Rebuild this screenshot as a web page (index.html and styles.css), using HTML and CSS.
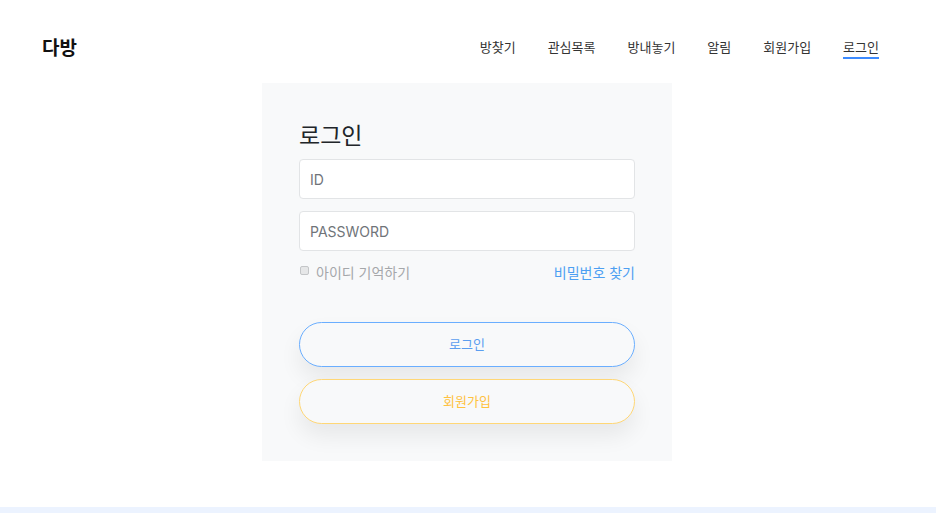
FILE: index.html
```html
<!DOCTYPE html>
<html lang="ko">
<head>
<meta charset="utf-8">
<title>다방 - 로그인</title>
<link rel="stylesheet" href="styles.css">
</head>
<body>
<header class="header">
  <div class="logo">다방</div>
  <nav class="nav">
    <a class="nav-link" href="#">방찾기</a>
    <a class="nav-link" href="#">관심목록</a>
    <a class="nav-link" href="#">방내놓기</a>
    <a class="nav-link" href="#">알림</a>
    <a class="nav-link" href="#">회원가입</a>
    <a class="nav-link active" href="#">로그인</a>
  </nav>
</header>
<main class="main">
  <form class="card">
    <h2 class="title">로그인</h2>
    <input class="field" type="text" placeholder="ID">
    <input class="field" type="password" placeholder="PASSWORD">
    <div class="options">
      <label class="remember"><span class="check"></span>아이디 기억하기</label>
      <a class="find" href="#">비밀번호 찾기</a>
    </div>
    <div class="buttons">
      <button type="button" class="btn btn-login">로그인</button>
      <button type="button" class="btn btn-join">회원가입</button>
    </div>
  </form>
</main>
<footer class="footer"></footer>
</body>
</html>
```
FILE: styles.css
```css
* { box-sizing: border-box; }
html, body { margin: 0; padding: 0; }
body {
  font-family: "Noto Sans CJK KR", "Noto Sans", sans-serif;
  color: #212529;
  background: #fff;
  overflow: hidden;
}
.header {
  height: 83px;
  display: flex;
  justify-content: space-between;
  align-items: flex-start;
  padding: 37px 57px 0 42px;
}
.logo {
  font-size: 19px;
  font-weight: 700;
  line-height: 20px;
  color: #111;
}
.nav {
  display: flex;
  gap: 32px;
}
.nav-link {
  font-size: 13px;
  line-height: 20px;
  color: #333;
  text-decoration: none;
  border-bottom: 2px solid transparent;
}
.nav-link.active { border-bottom-color: #3d8bff; }
.main {
  display: flex;
  justify-content: center;
  padding: 0 2px 46px 0;
}
.card {
  width: 410px;
  background: #f8f9fa;
  padding: 36px 37px 37px;
  display: flex;
  flex-direction: column;
}
.title {
  margin: 0 0 10px 0;
  font-size: 23px;
  font-weight: 400;
  line-height: 30px;
  color: #212529;
}
.field {
  height: 40px;
  width: 100%;
  border: 1px solid #e2e4e6;
  border-radius: 4px;
  background: #fff;
  padding: 0 10px;
  font-family: "Inter", "Noto Sans", sans-serif;
  font-size: 14px;
  color: #495057;
  outline: none;
}
.field::placeholder { color: #6f7479; }
.field + .field { margin-top: 12px; }
.options {
  margin-top: 11px;
  height: 20px;
  display: flex;
  justify-content: space-between;
  align-items: center;
}
.remember {
  display: flex;
  align-items: center;
  font-size: 14px;
  color: #a5a7aa;
}
.check {
  display: inline-block;
  width: 9px;
  height: 9px;
  margin: 0 7px 4px 1px;
  border: 1px solid #c4c6c8;
  border-radius: 2px;
  background: #e6e7e8;
}
.find {
  font-size: 14px;
  color: #4d9ff2;
  text-decoration: none;
}
.buttons {
  margin-top: 40px;
  display: flex;
  flex-direction: column;
  gap: 12px;
}
.btn {
  height: 45px;
  width: 100%;
  border-radius: 23px;
  background: #f8f9fa;
  font-family: "Noto Sans CJK KR", sans-serif;
  font-size: 13px;
  line-height: 20px;
  padding: 0 0 2px;
  cursor: pointer;
  box-shadow: 0 12px 22px rgba(0, 0, 0, 0.07);
}
.btn-login {
  border: 1.5px solid #6aaeff;
  color: #5b9ef0;
}
.btn-join {
  border: 1.5px solid #ffd776;
  color: #ffc23f;
}
.footer {
  height: 6px;
  background: #ecf3ff;
}
```
